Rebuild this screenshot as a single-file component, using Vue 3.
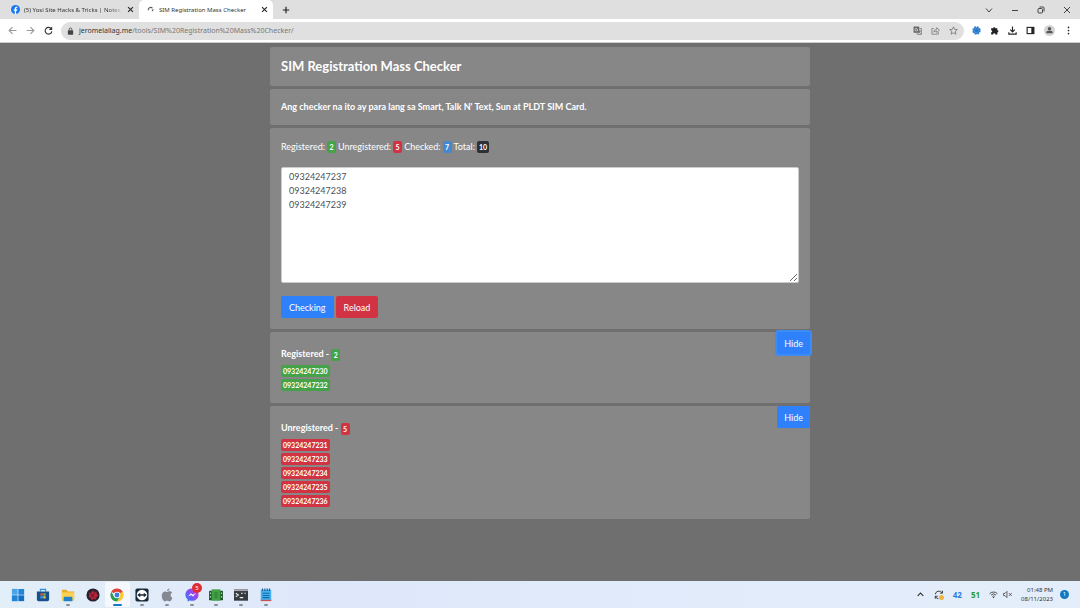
<script setup>
import { ref, computed } from 'vue'

const numbers = ref('09324247237\n09324247238\n09324247239')
const registered = ref(['09324247230', '09324247232'])
const unregistered = ref(['09324247231', '09324247233', '09324247234', '09324247235', '09324247236'])
const total = ref(10)
const showRegistered = ref(true)
const showUnregistered = ref(true)

const checked = computed(() => registered.value.length + unregistered.value.length)
</script>

<template>
  <div class="screen">
    <header class="browser">
      <div class="tabs">
        <div class="tab">
          <svg class="favicon" viewBox="0 0 16 16"><circle cx="8" cy="8" r="8" fill="#1877f2" /><path d="M6.8 16V10H5V7.600h1.800V6c0-2 1.100-3 2.900-3l1.500.1v2.100h-1c-.9 0-1.100.5-1.100 1.100v1.300h2.100L10.800 10H9.100v6z" fill="#fff" /></svg>
          <span class="tabTitle fade">(5) Yosi Site Hacks &amp; Tricks | Notes</span>
          <button class="tabClose" aria-label="Close tab"><svg viewBox="0 0 10 10"><path d="M1.500 1.500l7 7M8.500 1.500l-7 7" /></svg></button>
        </div>
        <div class="tab active">
          <svg class="favicon" viewBox="0 0 16 16"><path d="M4 9.500A4.500 4.500 0 0 1 11.500 5.500M12.500 7a4.500 4.500 0 0 1-2 4" fill="none" stroke="#555" stroke-width="1.800" /></svg>
          <span class="tabTitle">SIM Registration Mass Checker</span>
          <button class="tabClose" aria-label="Close tab"><svg viewBox="0 0 10 10"><path d="M1.500 1.500l7 7M8.500 1.500l-7 7" /></svg></button>
        </div>
        <button class="newTab" aria-label="New tab"><svg viewBox="0 0 10 10"><path d="M5 1v8M1 5h8" /></svg></button>
        <div class="windowBtns">
          <button aria-label="Search tabs"><svg viewBox="0 0 10 10"><path d="M2 3.500l3 3.500 3-3.500" /></svg></button>
          <button aria-label="Minimize"><svg viewBox="0 0 10 10"><path d="M2 5.500h6" /></svg></button>
          <button aria-label="Restore"><svg viewBox="0 0 10 10"><rect x="2" y="3.500" width="4.500" height="4.500" rx="1" /><path d="M3.500 2h3.500a1 1 0 0 1 1 1v3.500" /></svg></button>
          <button aria-label="Close window"><svg viewBox="0 0 10 10"><path d="M2 2l6 6M8 2l-6 6" /></svg></button>
        </div>
      </div>

      <div class="toolbar">
        <div class="nav">
          <button class="dim" aria-label="Back"><svg viewBox="0 0 16 16"><path d="M15 8H2M8 2L2 8l6 6" /></svg></button>
          <button class="dim" aria-label="Forward"><svg viewBox="0 0 16 16"><path d="M1 8h13M8 2l6 6-6 6" /></svg></button>
          <button aria-label="Reload page"><svg viewBox="0 0 16 16"><path d="M13 5A6 6 0 1 0 14 9.500" stroke-width="2" /><path d="M14.500 1v6h-6z" fill="#333" stroke="none" /></svg></button>
        </div>
        <div class="address">
          <svg class="lock" viewBox="0 0 10 12"><rect x="1" y="5" width="8" height="6.500" rx="1" fill="#444" /><path d="M3 5V3.500a2 2 0 0 1 4 0V5" fill="none" stroke="#444" stroke-width="1.300" /></svg>
          <a class="url" href="#"><b>jeromelaliag.me</b>/tools/SIM%20Registration%20Mass%20Checker/</a>
          <button aria-label="Translate"><svg viewBox="0 0 16 16"><rect x="1" y="1" width="10" height="11" rx="1" fill="#666" stroke="none" /><path d="M8.500 6.500a2.500 2.500 0 1 1-1-2M6.500 6.500h2" stroke="#eee" stroke-width="1.200" /><path d="M11 4.500h4V15H8l-1.500-3M10 9h4.500M12 8v1c0 2-1 3-2 4M11 10.500l2.500 3" stroke-width="1.200" /></svg></button>
          <button aria-label="Share"><svg viewBox="0 0 16 16"><path d="M5 4.500H1.500v10H13V11M5 11c.3-3.500 2-5 5-5V3l5 4.500-5 4V9c-2.500 0-4 .5-5 2z" stroke-width="1.200" /></svg></button>
          <button aria-label="Bookmark"><svg viewBox="0 0 16 16"><path d="M8 1.500l2 4.400 4.800.5-3.600 3.200 1 4.900L8 12l-4.200 2.500 1-4.900L1.200 6.400 6 5.900z" stroke-width="1.300" /></svg></button>
        </div>
        <div class="tools">
          <button aria-label="React extension"><svg viewBox="0 0 16 16"><circle cx="8" cy="8" r="6" fill="#4b94dc" stroke="#2877c7" stroke-width="3" stroke-dasharray="3 1.700" /><circle cx="8" cy="8" r="2.500" fill="#2877c7" stroke="none" /><path d="M8 3v10M3 8h10M4.500 4.500l7 7M11.500 4.500l-7 7" stroke="#2877c7" stroke-width="1" /></svg></button>
          <button aria-label="Extensions"><svg viewBox="0 0 16 16"><path d="M2 4h3.500a2 2 0 1 1 4 0H13v3.500a2 2 0 1 1 0 4V15H9.500a2 2 0 0 0-4 0H2v-3.500a2 2 0 0 0 0-4z" fill="#222" stroke="none" /></svg></button>
          <button aria-label="Downloads"><svg viewBox="0 0 16 16"><path d="M8 1v9M4 6.500l4 4 4-4M1.500 11v3.500h13V11" stroke="#222" stroke-width="2" /></svg></button>
          <button aria-label="Side panel"><svg viewBox="0 0 16 16"><rect x="2" y="2.500" width="12" height="11" stroke="#222" stroke-width="2" /><path d="M9.500 2.500H14v11H9.500z" fill="#222" stroke="none" /></svg></button>
          <button class="profile" aria-label="Profile"><svg viewBox="0 0 16 16"><circle cx="8" cy="8" r="8" fill="#d3d3d3" stroke="none" /><circle cx="8" cy="5.500" r="2.500" fill="#555" stroke="none" /><path d="M3.500 12V10.500C3.500 8.500 6 8.500 8 8.500s4.500 0 4.500 2V12z" fill="#555" stroke="none" /></svg></button>
          <button aria-label="Menu"><svg viewBox="0 0 16 16"><g fill="#222" stroke="none"><circle cx="8" cy="2.500" r="1.500" /><circle cx="8" cy="8" r="1.500" /><circle cx="8" cy="13.500" r="1.500" /></g></svg></button>
        </div>
      </div>
    </header>

    <main class="page">
      <div class="container">
        <section class="card">
          <h1>SIM Registration Mass Checker</h1>
        </section>

        <section class="card note">
          <p>Ang checker na ito ay para lang sa Smart, Talk N' Text, Sun at PLDT SIM Card.</p>
        </section>

        <section class="card form">
          <label class="counts" for="numbers">
            <span>Registered:</span> <span class="badge green">{{ registered.length }}</span>
            <span>Unregistered:</span> <span class="badge red">{{ unregistered.length }}</span>
            <span>Checked:</span> <span class="badge blue">{{ checked }}</span>
            <span>Total:</span> <span class="badge dark">{{ total }}</span>
          </label>
          <textarea id="numbers" v-model="numbers" spellcheck="false"></textarea>
          <div class="actions">
            <button class="btn">Checking</button>
            <button class="btn danger">Reload</button>
          </div>
        </section>

        <section class="card result">
          <h2>Registered - <span class="badge green">{{ registered.length }}</span></h2>
          <button class="btn hideBtn focused" @click="showRegistered = !showRegistered">{{ showRegistered ? 'Hide' : 'Show' }}</button>
          <ul v-if="showRegistered">
            <li v-for="n in registered" :key="n"><span class="badge green">{{ n }}</span></li>
          </ul>
        </section>

        <section class="card result">
          <h2>Unregistered - <span class="badge red">{{ unregistered.length }}</span></h2>
          <button class="btn hideBtn" @click="showUnregistered = !showUnregistered">{{ showUnregistered ? 'Hide' : 'Show' }}</button>
          <ul v-if="showUnregistered">
            <li v-for="n in unregistered" :key="n"><span class="badge red">{{ n }}</span></li>
          </ul>
        </section>
      </div>
    </main>

    <footer class="taskbar">
      <div class="apps">
        <button aria-label="Start"><svg viewBox="0 0 16 16"><path d="M1 1h6.600v6.600H1z" fill="#4aa5e6" /><path d="M8.400 1H15v6.600H8.400zM1 8.400h6.600V15H1z" fill="#2286d8" /><path d="M8.400 8.400H15V15H8.400z" fill="#0f6fc4" /></svg></button>
        <button aria-label="Store"><svg viewBox="0 0 16 16"><path d="M5 4V1.500h6V4" fill="none" stroke="#2b8ed8" stroke-width="1.300" /><path d="M1 4h14v9a2 2 0 0 1-2 2H3a2 2 0 0 1-2-2z" fill="#17508c" /><path d="M5 6h2.700v2.700H5z" fill="#e8533f" /><path d="M8.300 6H11v2.700H8.300z" fill="#7ab648" /><path d="M5 9.300h2.700V12H5z" fill="#35a0e4" /><path d="M8.300 9.300H11V12H8.300z" fill="#f5bd36" /></svg></button>
        <button class="open" aria-label="File Explorer"><svg viewBox="0 0 16 16"><path d="M1 2h5l2 2h7v10H1z" fill="#e9ae28" /><path d="M1 5h14v9.500H1z" fill="#fcd053" /><path d="M4 10h8a1 1 0 0 1 1 1v4H3v-4a1 1 0 0 1 1-1z" fill="#1f83c9" /></svg></button>
        <button aria-label="Recorder"><svg viewBox="0 0 16 16"><circle cx="8" cy="8" r="7.500" fill="#252029" /><path d="M8 2.500l1.500 2 2.500-.5.200 2.700L14 8.500l-2 1.800-.5 2.700-2.600-.5L6.500 14l-1-2.600L3 10.500l1-2.500-1-2.500 2.800-.2z" fill="#b92239" /><path d="M5 6l5 5M10 5l-4 6" stroke="#3a2029" /></svg></button>
        <button class="open current" aria-label="Chrome"><svg viewBox="0 0 16 16"><path d="M8 8L14.500 4.250A7.500 7.500 0 0 1 8 15.500l3.300-5.600z" fill="#fbc72f" /><path d="M8 8l3.300 1.900L8 15.500A7.500 7.500 0 0 1 1.500 4.250L4.700 9.900z" fill="#2b9b50" /><path d="M1.500 4.250A7.500 7.500 0 0 1 14.500 4.250L8 8z" fill="#df4334" /><circle cx="8" cy="8" r="3.700" fill="#fff" /><circle cx="8" cy="8" r="2.800" fill="#3b7de5" /></svg></button>
        <button class="open" aria-label="TeamViewer"><svg viewBox="0 0 16 16"><rect x="0.500" y="0.500" width="15" height="15" rx="2" fill="#172a3a" /><circle cx="8" cy="8" r="6" fill="#fff" /><path d="M2.500 8L6 5.300v1.800h4V5.300L13.500 8 10 10.700V8.900H6v1.800z" fill="#172a3a" /></svg></button>
        <button class="open" aria-label="Apple"><svg viewBox="0 0 16 16"><path d="M10.800 0.500c.1 1.500-1.200 3-2.700 3-.2-1.500 1.200-2.900 2.700-3zM8.200 4.500c.8 0 1.600-.8 2.900-.7 1.100 0 2.100.6 2.700 1.500-2.400 1.400-2 4.800.5 5.800-.7 1.900-2 4.200-3.600 4.200-1 0-1.400-.6-2.500-.6s-1.500.6-2.500.6C3.700 15.300 2 11.700 2 8.900c0-3.100 1.900-5 3.800-5 1.100 0 1.800.6 2.400.6z" fill="#858890" /></svg></button>
        <button class="open" aria-label="Messenger"><svg viewBox="0 0 16 16"><defs><linearGradient id="msg" x1="0" y1="1" x2="1" y2="0"><stop offset="0" stop-color="#267bff" /><stop offset="0.600" stop-color="#9349f2" /><stop offset="1" stop-color="#f45279" /></linearGradient></defs><path d="M8 .5C3.500.5.500 3.600.500 7.600c0 2.200 1 4 2.500 5.300v2.600l2.500-1.300c.8.300 1.600.4 2.500.4 4.500 0 7.500-3.100 7.500-7S12.500.5 8 .5z" fill="url(#msg)" /><path d="M3.500 9.800l3.200-3.900 2.300 1.900 3.500-2-3.200 4L7 8z" fill="#fff" /></svg><span class="alert">5</span></button>
        <button class="open" aria-label="Editor"><svg viewBox="0 0 16 16"><rect x="0" y="3" width="16" height="11" rx="1" fill="#1e542b" /><path d="M3 1.500h10v13H3z" fill="#43a047" /><path d="M1.500 5v2M1.500 9v2M14.500 5v2M14.500 9v2" stroke="#b5e2b8" stroke-width="1.200" /><path d="M6 5.500h4M6 8h4M6 10.500h4" stroke="#25772f" /></svg></button>
        <button class="open" aria-label="Terminal"><svg viewBox="0 0 16 16"><path d="M0 1.500h16v13H0z" fill="#353a3f" /><path d="M0 1.500h16v2H0z" fill="#a7abb0" /><path d="M2 6l3 2-3 2M6.500 11h4M8 6h2M12 6h1.500" fill="none" stroke="#eee" stroke-width="1.200" /></svg></button>
        <button class="open" aria-label="Notepad"><svg viewBox="0 0 16 16"><path d="M2 2h12v12.500H2z" fill="#45b1ee" /><path d="M2 13.500h12V15H2z" fill="#c8504e" /><path d="M4 .5v3M6.700.5v3M9.400.5v3M12 .5v3" stroke="#165b91" stroke-width="1.300" /><path d="M4 6h8M4 8.500h8M4 11h8" stroke="#116aae" stroke-width="1.200" /></svg></button>
      </div>
      <div class="tray">
        <svg viewBox="0 0 16 16"><path d="M3 10.500l5-5 5 5" stroke-width="2" /></svg>
        <svg class="sync" viewBox="0 0 16 16"><path d="M2 7a6 6 0 0 1 11-2.500M13.500 1v4h-4M7 14a6 6 0 0 1-5-4M2 14v-4h4" stroke-width="1.500" /><circle cx="12" cy="12" r="4" fill="#f2b33d" stroke="none" /></svg>
        <span class="temp cpu">42</span>
        <span class="temp gpu">51</span>
        <svg class="wifi" viewBox="0 0 16 16"><path d="M1 6.500a10 10 0 0 1 14 0M3.500 9a6.500 6.500 0 0 1 9 0M6 11.500a3 3 0 0 1 4 0" stroke-width="1.500" /><circle cx="8" cy="13.500" r="1.200" fill="#333" stroke="none" /></svg>
        <svg class="sound" viewBox="0 0 16 16"><path d="M1 6h2.500L7 2.500v11L3.500 10H1zM10.500 5.500l5 5M15.500 5.500l-5 5" stroke-width="1.300" /></svg>
        <div class="clock">
          <span>01:48 PM</span>
          <span>08/11/2023</span>
        </div>
        <span class="notice">1</span>
      </div>
    </footer>
  </div>
</template>

<style>
html,
body {
  margin: 0;
  background-color: #6f6f6f;
}
</style>

<style scoped>
.screen {
  min-height: 100vh;
  display: flex;
  flex-direction: column;
  font-family: "Noto Sans", "Open Sans", sans-serif;
  color: #333;
}

.screen * {
  box-sizing: border-box;
}

button {
  border: none;
  padding: 0;
  background-color: transparent;
  font-family: inherit;
  cursor: pointer;
}

svg {
  display: block;
  flex: none;
}

/* browser tabs */
.tabs {
  height: 19px;
  display: flex;
  align-items: center;
  background-color: #dfdfdf;
}

.tab {
  height: 19px;
  width: 139px;
  padding: 0 5px 0 11px;
  display: flex;
  align-items: center;
  gap: 4px;
  font-size: 6px;
}

.tab.active {
  width: 134px;
  padding: 0 5px 0 7px;
  background-color: #fff;
  border-radius: 5px 5px 0 0;
}

.favicon {
  width: 9px;
  height: 9px;
}

.tabTitle {
  flex: 1;
  overflow: hidden;
  white-space: nowrap;
}

.fade {
  mask-image: linear-gradient(to right, #000 85%, transparent);
}

.tabClose svg,
.newTab svg {
  width: 7px;
  height: 7px;
  fill: none;
  stroke: #222;
  stroke-width: 1.5;
}

.newTab {
  margin-left: 9px;
}

.newTab svg {
  width: 8px;
  height: 8px;
}

.windowBtns {
  margin-left: auto;
  padding-right: 8px;
  display: flex;
  gap: 16px;
}

.windowBtns svg {
  width: 10px;
  height: 10px;
  fill: none;
  stroke: #444;
}

/* address bar */
.toolbar {
  height: 24px;
  padding: 0 7px 0 8px;
  display: flex;
  align-items: center;
  gap: 8px;
  background-color: #fff;
  border-bottom: 1px solid #ccc;
}

.nav,
.tools {
  display: flex;
  align-items: center;
  gap: 9px;
}

.toolbar button svg {
  width: 9px;
  height: 9px;
  fill: none;
  stroke: #333;
  stroke-width: 2;
}

.toolbar .dim svg {
  stroke: #999;
}

.address {
  flex: 1;
  height: 18px;
  padding: 0 6px;
  display: flex;
  align-items: center;
  gap: 9px;
  border-radius: 9px;
  background-color: #e0e0e0;
}

.toolbar .address button svg {
  stroke: #666;
}

.lock {
  width: 7px;
  height: 8px;
}

.url {
  flex: 1;
  margin-left: -4px;
  font-size: 7px;
  color: #777;
  text-decoration: none;
}

.url b {
  font-weight: normal;
  color: #333;
}

.toolbar .profile svg {
  width: 11px;
  height: 11px;
}

/* page */
.page {
  flex: 1;
  padding-top: 4px;
  background-color: #6f6f6f;
  font-family: Lato, "Open Sans", sans-serif;
  font-size: 9px;
  line-height: 14px;
  color: #fff;
}

.container {
  width: 50%;
  margin: 0 auto;
  display: flex;
  flex-direction: column;
  gap: 3px;
}

.card {
  position: relative;
  padding: 11px;
  border-radius: 2px;
  background-color: #878787;
}

h1 {
  margin: 0;
  font-size: 13px;
  line-height: 17px;
  font-weight: bold;
}

.note p {
  margin: 0;
  font-weight: bold;
}

.counts {
  display: flex;
  align-items: center;
  gap: 2px;
}

.form {
  padding-top: 12px;
}

.badge {
  display: inline-block;
  min-width: 9px;
  height: 12px;
  padding: 0 2px;
  border-radius: 2px;
  font-size: 7px;
  line-height: 12px;
  font-weight: bold;
  text-align: center;
  vertical-align: middle;
}

.green {
  background-color: #45a249;
}

.red {
  background-color: #d13343;
}

.blue {
  background-color: #4588ce;
}

.dark {
  background-color: #2c3038;
}

textarea {
  display: block;
  width: 100%;
  height: 116px;
  margin: 13px 0;
  padding: 2px 7px;
  border: 1px solid #ccc;
  border-radius: 2px;
  font-family: inherit;
  font-size: 9px;
  line-height: 14px;
  color: #495057;
  background-color: #fff;
}

.actions {
  display: flex;
  gap: 2px;
}

.btn {
  height: 22px;
  padding: 0 7px;
  border-radius: 2px;
  font-size: 9px;
  color: #fff;
  background-color: #2f80fb;
}

.actions .btn {
  padding: 0 8px;
}

.danger {
  background-color: #d13343;
}

.result {
  padding: 15px 11px 10px;
}

h2 {
  margin: 0 0 3px;
  font-size: 9px;
  line-height: 14px;
  font-weight: bold;
}

ul {
  margin: 0;
  padding: 0 0 1px;
  list-style: none;
}

li {
  height: 14px;
  display: flex;
  align-items: center;
}

/* sits over the card's corner */
.hideBtn {
  position: absolute;
  top: 0;
  right: 0;
}

.focused {
  box-shadow: 0 0 0 2px #3f8cf5;
}

/* taskbar */
.taskbar {
  height: 27px;
  padding: 0 11px 0 6px;
  display: flex;
  align-items: center;
  justify-content: space-between;
  background: linear-gradient(to right, #e2eef8, #dfe8fa 30%, #e4eefa);
}

.apps {
  width: 272px;
  display: flex;
}

.apps button {
  position: relative;
  flex: 1;
  height: 25px;
  display: flex;
  align-items: center;
  justify-content: center;
}

.apps svg {
  width: 14px;
  height: 14px;
}

.open::after {
  content: "";
  position: absolute;
  bottom: 1px;
  width: 4px;
  height: 2px;
  border-radius: 1px;
  background-color: #8a8f96;
}

.apps .current {
  background-color: #f5f9fe;
  border-radius: 2px;
}

.current::after {
  width: 9px;
  background-color: #1b76c8;
}

.alert {
  position: absolute;
  top: 1px;
  right: 2px;
  width: 10px;
  height: 10px;
  border-radius: 50%;
  font-size: 6px;
  line-height: 10px;
  color: #fff;
  background-color: #e02b35;
}

.tray {
  display: flex;
  align-items: center;
  gap: 9px;
}

.tray svg {
  width: 9px;
  height: 9px;
  fill: none;
  stroke: #333;
}

.tray .sync {
  width: 10px;
  height: 10px;
}

.temp {
  font-size: 8px;
  font-weight: bold;
}

.cpu {
  color: #2b7de0;
}

.gpu {
  color: #2b9a2b;
}

.tray .sound {
  margin-left: -4px;
}

.clock {
  display: flex;
  flex-direction: column;
  text-align: right;
  font-size: 6px;
  line-height: 9px;
}

.notice {
  width: 9px;
  height: 9px;
  margin-left: -2px;
  border-radius: 50%;
  font-size: 6px;
  line-height: 9px;
  text-align: center;
  color: #fff;
  background-color: #1578c2;
}
</style>
